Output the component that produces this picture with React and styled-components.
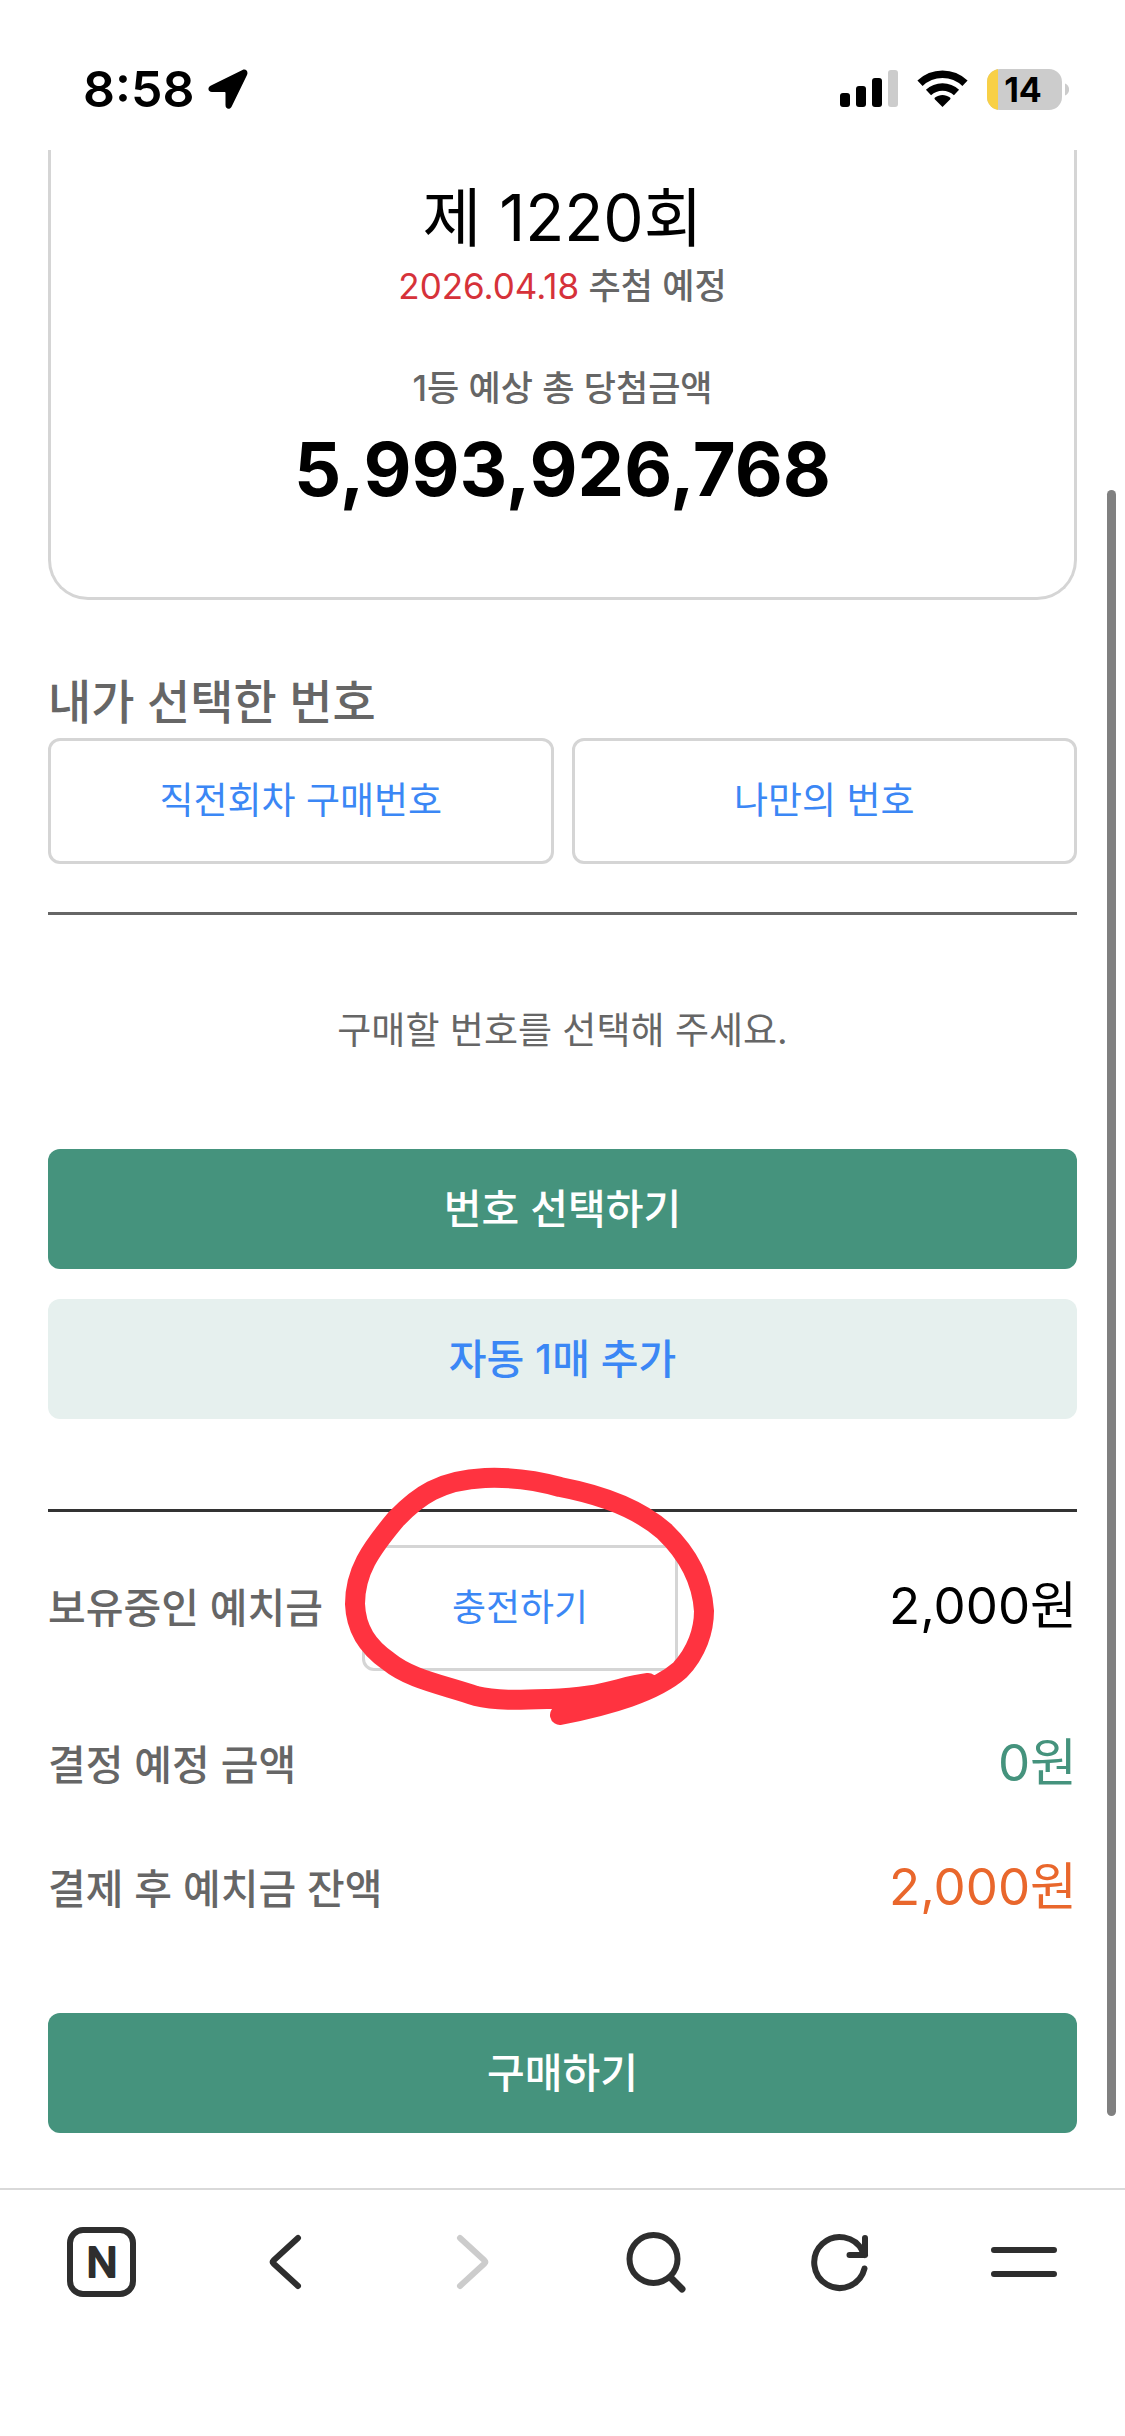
import React from 'react'
import styled, { createGlobalStyle } from 'styled-components'

const GlobalStyle = createGlobalStyle`
    * {
        box-sizing: border-box;
    }
    body {
        margin: 0;
        background: #fff;
        color: #000;
        font-family: Inter, 'Noto Sans CJK KR', sans-serif;
    }
    h1, h2, p {
        margin: 0;
        font-weight: 400;
    }
    button {
        margin: 0;
        padding: 0;
        border: 0;
        background: none;
        font-family: inherit;
        cursor: pointer;
    }
    svg {
        display: block;
    }
`

const Page = styled.div`
    display: flex;
    flex-direction: column;
    min-height: 100vh;
`

/* status bar */
const StatusBar = styled.header`
    display: flex;
    justify-content: space-between;
    align-items: center;
    height: 150px;
    padding: 28px 56px 0 83px;
`
const StatusGroup = styled.div`
    display: flex;
    align-items: center;
    gap: ${props => props.$gap}px;
`
const Clock = styled.span`
    font-size: 50px;
    font-weight: 600;
    line-height: 60px;
`

/* scrolled content */
const Main = styled.main`
    position: relative;
    padding: 0 48px 55px;
`
const ScrollThumb = styled.div`
    position: absolute;
    top: 340px;
    right: 9px;
    bottom: 72px;
    width: 9px;
    border-radius: 5px;
    background: #808080;
`
const RoundCard = styled.section`
    display: flex;
    flex-direction: column;
    align-items: center;
    padding: 32px 0 80px;
    border: 3px solid #d5d5d5;
    border-top: 0;
    border-radius: 0 0 40px 40px;
`
const RoundTitle = styled.h1`
    font-size: 64px;
    line-height: 72px;
`
const CardText = styled.p`
    margin-top: ${props => props.$top}px;
    color: #666;
    font-size: 35px;
    font-weight: 500;
    line-height: 48px;
`
const DrawDate = styled.span`
    color: #d6323a;
    font-weight: 400;
`
const Prize = styled.p`
    margin-top: 9px;
    font-size: 74px;
    font-weight: 700;
    line-height: 96px;
`
const SectionTitle = styled.h2`
    margin: 72px 0 6px;
    color: #666;
    font-size: 47px;
    font-weight: 500;
    line-height: 60px;
`
const PickRow = styled.div`
    display: grid;
    grid-template-columns: 1fr 1fr;
    gap: 18px;
`
const OutlineButton = styled.button`
    height: 126px;
    padding: 0 87px;
    border: 3px solid #d5d5d5;
    border-radius: 12px;
    background: #fff;
    color: #3b87f5;
    font-size: 37px;
    line-height: 48px;
`
const Divider = styled.hr`
    height: 3px;
    margin: ${props => props.$top}px 0 0;
    border: 0;
    background: ${props => props.$color};
`
const Prompt = styled.p`
    margin: 92px 0 94px;
    color: #666;
    text-align: center;
    font-size: 37px;
    line-height: 48px;
`
const ButtonStack = styled.div`
    display: flex;
    flex-direction: column;
    gap: 30px;
`
const FillButton = styled.button`
    width: 100%;
    height: 120px;
    border-radius: 12px;
    background: ${props => (props.$light ? '#e6f0ee' : '#45937d')};
    color: ${props => (props.$light ? '#3b87f5' : '#fff')};
    font-size: 41px;
    font-weight: 500;
    line-height: 48px;
`
const Amounts = styled.div`
    display: flex;
    flex-direction: column;
    gap: 64px;
    padding: 33px 0 94px;
`
const AmountRow = styled.div`
    display: flex;
    align-items: center;
    min-height: 60px;
`
const AmountLabel = styled.span`
    color: #666;
    font-size: 41px;
    font-weight: 500;
    line-height: 60px;
`
const AmountValue = styled.span`
    margin-left: auto;
    padding-bottom: 4px;
    color: ${props => props.$color};
    font-size: 51px;
    line-height: 56px;
`
const ChargeBox = styled.div`
    position: relative;
    margin-left: 39px;
`
const InkCircle = styled.svg`
    position: absolute;
    top: -85px;
    left: -22px;
    pointer-events: none;
`

/* browser toolbar */
const Toolbar = styled.nav`
    display: grid;
    grid-template-columns: repeat(6, 1fr);
    justify-items: center;
    align-items: start;
    flex: 1;
    padding: 36px 10px 138px;
    border-top: 2px solid #d9d9d9;
`
const ToolIcon = styled.svg`
    fill: none;
    stroke: ${props => (props.$off ? '#ccc' : '#2e2e2e')};
    stroke-width: 6;
    stroke-linecap: round;
    stroke-linejoin: round;
`
const HomeLetter = styled.text`
    fill: #2e2e2e;
    stroke-width: 2;
    font-size: 41px;
    font-weight: 500;
`
const BatteryLevel = styled.text`
    font-size: 34px;
    font-weight: 700;
`

const Tool = ({ label, off, children }) => (
    <button type="button" aria-label={label} disabled={off}>
        <ToolIcon $off={off} width="72" height="72" viewBox="0 0 72 72">
            {children}
        </ToolIcon>
    </button>
)

const Status = () => (
    <StatusBar>
        <StatusGroup $gap={14}>
            <Clock>8:58</Clock>
            <svg width="40" height="40" viewBox="0 0 40 40">
                <path d="M34.5 1 3 16.5c-4 2-3 6.5 1 6.5h12.500c.6 0 1 .4 1 1V36c0 4.500 4.500 5 6.200 1.500L39 6c1.500-3.500-1-6.500-4.500-5z" />
            </svg>
        </StatusGroup>
        <StatusGroup $gap={19}>
            <svg width="58" height="38" viewBox="0 0 58 38">
                <rect x="0" y="23" width="10" height="14" rx="3" />
                <rect x="16" y="16" width="10" height="21" rx="3" />
                <rect x="32" y="8" width="10" height="29" rx="3" />
                <rect x="48" y="0" width="10" height="37" rx="3" fill="#ccc" />
            </svg>
            <svg width="51" height="38" viewBox="0 0 51 38">
                <path d="M25.500 37 18 29.500c-.7-.7-.6-1.500 0-2 4.500-3.400 10.500-3.400 15 0 .6.5.7 1.300 0 2z" />
                <path d="M11.500 22.500a20.500 20.500 0 0 1 28 0M3 13.200a32.500 32.500 0 0 1 45 0" fill="none" stroke="#000" strokeWidth="7.500" />
            </svg>
            <svg width="82" height="41" viewBox="0 0 82 41">
                <clipPath id="shell"><rect width="75" height="41" rx="13" /></clipPath>
                <g clipPath="url(#shell)">
                    <rect width="75" height="41" fill="#ccc" />
                    <rect width="11" height="41" fill="#f8d046" />
                </g>
                <path d="M78 14.500c5.500 2 5.500 10 0 12z" fill="#ccc" />
                <BatteryLevel x="36" y="33" textAnchor="middle">14</BatteryLevel>
            </svg>
        </StatusGroup>
    </StatusBar>
)

const App = () => {
    return (
    <Page>
        <GlobalStyle />
        <Status />
        <Main>
            <RoundCard>
                <RoundTitle>제 1220회</RoundTitle>
                <CardText $top={8}><DrawDate>2026.04.18</DrawDate> 추첨 예정</CardText>
                <CardText $top={54}>1등 예상 총 당첨금액</CardText>
                <Prize>5,993,926,768</Prize>
            </RoundCard>

            <SectionTitle>내가 선택한 번호</SectionTitle>
            <PickRow>
                <OutlineButton type="button">직전회차 구매번호</OutlineButton>
                <OutlineButton type="button">나만의 번호</OutlineButton>
            </PickRow>
            <Divider $top={48} $color="#666" />
            <Prompt>구매할 번호를 선택해 주세요.</Prompt>
            <ButtonStack>
                <FillButton type="button">번호 선택하기</FillButton>
                <FillButton type="button" $light>자동 1매 추가</FillButton>
            </ButtonStack>
            <Divider $top={90} $color="#333" />

            <Amounts>
                <AmountRow>
                    <AmountLabel>보유중인 예치금</AmountLabel>
                    <ChargeBox>
                        <OutlineButton type="button">충전하기</OutlineButton>
                        <InkCircle width="380" height="272" viewBox="340 1460 380 272" fill="none" stroke="#ff3340" strokeWidth="20" strokeLinecap="round" strokeLinejoin="round">
                            <path d="M560 1715C610 1705 655 1692 680 1670C697 1652 704 1630 704 1611C702 1580 687 1553 664 1531C640 1510 602 1495 560 1487C535 1480 510 1477 485 1478C440 1480 418 1496 396 1519C370 1550 355 1572 355 1604C356 1630 368 1647 388 1661C410 1679 440 1684 476 1696C496 1701 520 1700 549 1699C600 1698 618 1687 648 1683" />
                        </InkCircle>
                    </ChargeBox>
                    <AmountValue $color="#000">2,000원</AmountValue>
                </AmountRow>
                <AmountRow>
                    <AmountLabel>결정 예정 금액</AmountLabel>
                    <AmountValue $color="#45937d">0원</AmountValue>
                </AmountRow>
                <AmountRow>
                    <AmountLabel>결제 후 예치금 잔액</AmountLabel>
                    <AmountValue $color="#e9672c">2,000원</AmountValue>
                </AmountRow>
            </Amounts>
            <FillButton type="button">구매하기</FillButton>
            <ScrollThumb />
        </Main>
        <Toolbar>
            <Tool label="홈">
                <rect x="4" y="4" width="63" height="64" rx="13" />
                <HomeLetter x="36" y="51" textAnchor="middle">N</HomeLetter>
            </Tool>
            <Tool label="뒤로">
                <path d="M48 12 23.500 34.500q-1.500 1.500 0 3L48 60" />
            </Tool>
            <Tool label="앞으로" off>
                <path d="M26 12 50.500 34.500q1.500 1.500 0 3L26 60" />
            </Tool>
            <Tool label="검색">
                <circle cx="34.500" cy="33" r="24" />
                <path d="M52 52 63 63" strokeWidth="7" />
            </Tool>
            <Tool label="새로고침">
                <path d="M61.500 42.500A25.500 25.500 0 1 1 59.500 25" />
                <path d="M62 12v17H46.500M59 24l3 5" />
            </Tool>
            <Tool label="메뉴">
                <path d="M7 24h60M7 48h60" />
            </Tool>
        </Toolbar>
    </Page>)
}

export default App
